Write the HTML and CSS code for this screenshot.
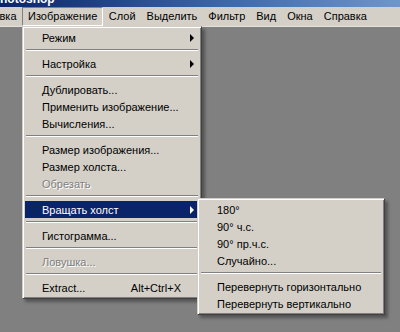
FILE: index.html
```
<!DOCTYPE html>
<html lang="ru">
<head>
    <meta charset="UTF-8">
    <title>Photoshop</title>
    <link rel="stylesheet" href="styles.css">
</head>
<body>
    <div class="titlebar"><span class="title">Photoshop</span></div>
    <div class="menubar">
        <span class="mb-item">вка</span>
        <span class="mb-item open">Изображение</span>
        <span class="mb-item">Слой</span>
        <span class="mb-item">Выделить</span>
        <span class="mb-item">Фильтр</span>
        <span class="mb-item">Вид</span>
        <span class="mb-item">Окна</span>
        <span class="mb-item">Справка</span>
    </div>
    <div class="workspace"></div>

    <div class="menu main-menu">
        <div class="item">Режим<span class="arrow"></span></div>
        <div class="sep"></div>
        <div class="item">Настройка<span class="arrow"></span></div>
        <div class="sep"></div>
        <div class="item">Дублировать...</div>
        <div class="item">Применить изображение...</div>
        <div class="item">Вычисления...</div>
        <div class="sep"></div>
        <div class="item">Размер изображения...</div>
        <div class="item">Размер холста...</div>
        <div class="item disabled">Обрезать</div>
        <div class="sep"></div>
        <div class="item active">Вращать холст<span class="arrow"></span></div>
        <div class="sep"></div>
        <div class="item">Гистограмма...</div>
        <div class="sep"></div>
        <div class="item disabled">Ловушка...</div>
        <div class="sep"></div>
        <div class="item">Extract...<span class="shortcut">Alt+Ctrl+X</span></div>
    </div>

    <div class="menu sub-menu">
        <div class="item">180°</div>
        <div class="item">90° ч.с.</div>
        <div class="item">90° пр.ч.с.</div>
        <div class="item">Случайно...</div>
        <div class="sep"></div>
        <div class="item">Перевернуть горизонтально</div>
        <div class="item">Перевернуть вертикально</div>
    </div>
</body>
</html>
```

FILE: styles.css
```
body {
    margin: 0;
    width: 400px;
    height: 332px;
    overflow: hidden;
    position: relative;
    background-color: #808080;
    font-family: "Liberation Sans", Arial, sans-serif;
    font-size: 11px;
    color: #000;
}
.titlebar {
    height: 7px;
    overflow: hidden;
    background: linear-gradient(to right, #0a246a, #3f6cb0 60%, #6f96cc);
}
.title {
    display: block;
    margin-top: -7px;
    margin-left: -8px;
    color: #fff;
    font-weight: bold;
    font-size: 12px;
    line-height: 12px;
}
.menubar {
    height: 19px;
    display: flex;
    align-items: center;
    padding-left: 0;
    margin-left: -6px;
    background-color: #d4d0c8;
    border-bottom: 1px solid #e4e2dc;
}
.mb-item {
    padding: 0 4.5px;
    line-height: 17px;
    border: 1px solid transparent;
    white-space: nowrap;
}
.mb-item.open {
    padding: 0 5px;
    border-color: #808080 #fff #fff #808080;
}
.workspace {
    height: 305px;
}
.menu {
    position: absolute;
    box-sizing: border-box;
    padding: 2px;
    background-color: #d4d0c8;
    border: 1px solid;
    border-color: #d4d0c8 #404040 #404040 #d4d0c8;
    box-shadow: inset 1px 1px #fff, inset -1px -1px #808080, 3px 3px 3px rgba(0, 0, 0, 0.35);
}
.main-menu {
    left: 22px;
    top: 26px;
    width: 180px;
}
.sub-menu {
    left: 197px;
    top: 198px;
    width: 188px;
}
.item {
    display: flex;
    align-items: center;
    height: 17px;
    padding-left: 17px;
    white-space: nowrap;
}
.item.active {
    background-color: #0a246a;
    color: #fff;
}
.item.disabled {
    color: #808080;
    text-shadow: 1px 1px #fff;
}
.sep {
    height: 9px;
    box-sizing: border-box;
    padding: 3px 1px 0;
}
.sep::before {
    content: "";
    display: block;
    border-top: 1px solid #808080;
    border-bottom: 1px solid #fff;
}
.arrow {
    margin-left: auto;
    margin-right: 5px;
    width: 0;
    height: 0;
    border-left: 4px solid #000;
    border-top: 4px solid transparent;
    border-bottom: 4px solid transparent;
}
.item.active .arrow {
    border-left-color: #fff;
}
.shortcut {
    margin-left: auto;
    margin-right: 18px;
}
```
